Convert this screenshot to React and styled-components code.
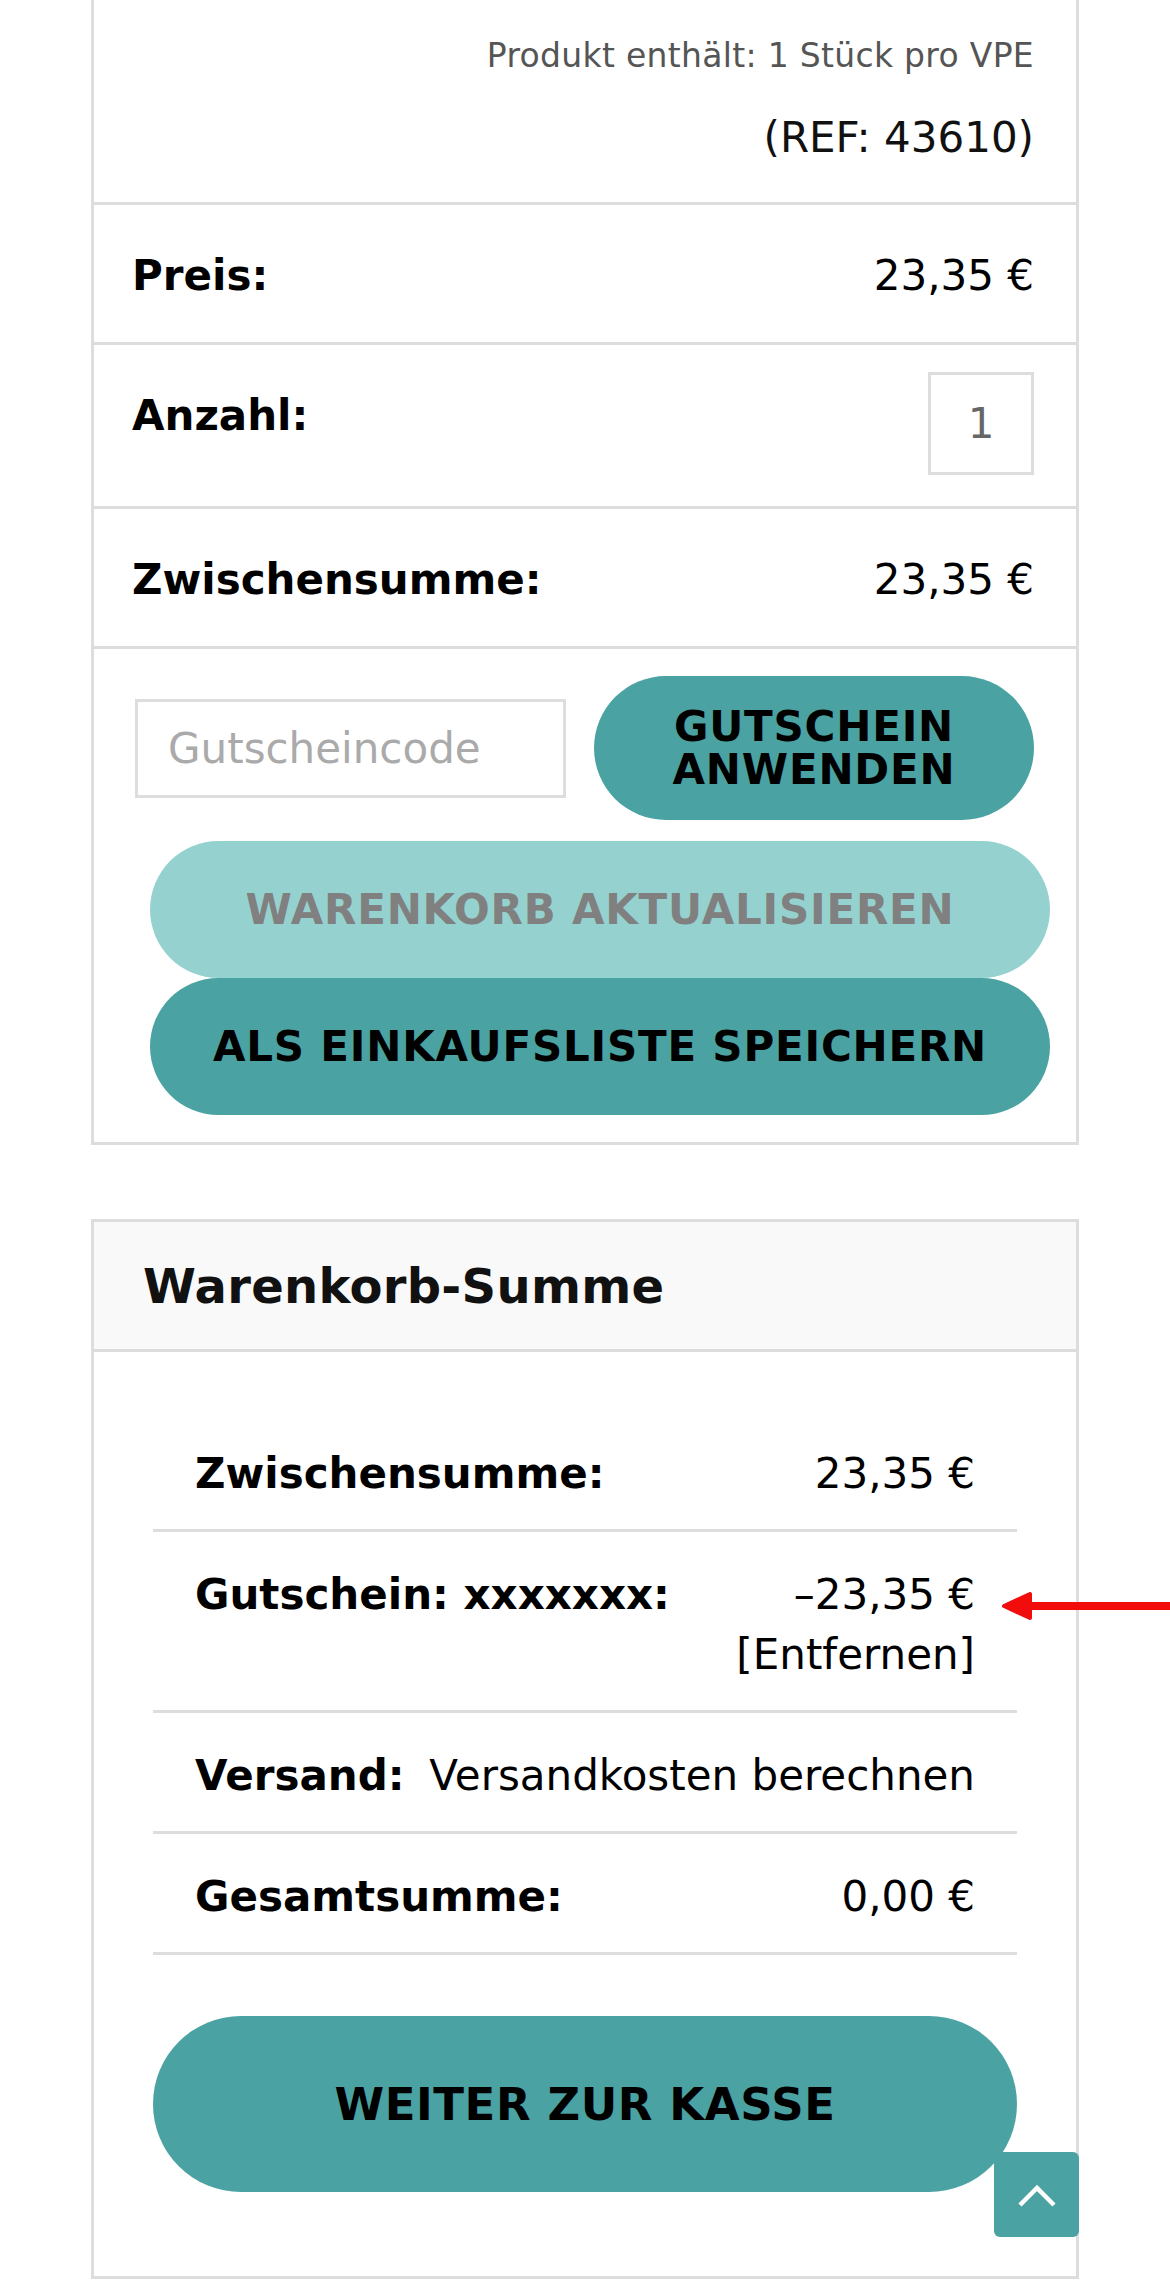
import React from 'react';
import styled, { createGlobalStyle } from 'styled-components';

const teal = '#4aa3a2';
const lightTeal = '#95d2cf';
const line = '#dddddd';

const GlobalStyle = createGlobalStyle`
  * { box-sizing: border-box; }
  body {
    margin: 0;
    background: #fff;
    color: #000;
    font-family: "DejaVu Sans", Verdana, sans-serif;
  }
`;

const Page = styled.div`
  padding: 0 91px 4px;
`;

const CartCard = styled.div`
  border: 3px solid ${line};
  border-top: none;
`;

const InfoCell = styled.div`
  padding: 31px 42px 33px;
  text-align: right;
`;

const PackInfo = styled.div`
  font-size: 33px;
  line-height: 49px;
  letter-spacing: 0.3px;
  color: #555;
`;

const RefInfo = styled.div`
  margin-top: 26px;
  font-size: 42px;
  line-height: 63px;
  color: #111;
`;

const Row = styled.div`
  display: flex;
  justify-content: space-between;
  align-items: flex-start;
  border-top: 3px solid ${line};
  padding: 0 42px 0 38px;
  font-size: 42px;
  line-height: 63px;
`;

const Label = styled.span`
  font-weight: bold;
  padding: 39px 0 35px;
`;

const Value = styled.span`
  padding: 39px 0 35px;
`;

const QtyCell = styled.div`
  padding: 27px 0 31px;
`;

const QtyInput = styled.input`
  display: block;
  width: 106px;
  height: 103px;
  border: 3px solid ${line};
  border-radius: 0;
  text-align: center;
  font: 42px "DejaVu Sans", Verdana, sans-serif;
  color: #666;
  padding: 0;
`;

const CouponSection = styled.div`
  border-top: 3px solid ${line};
  padding: 27px 42px 27px 41px;
`;

const CouponRow = styled.div`
  display: flex;
  align-items: center;
  gap: 28px;
`;

const CouponInput = styled.input`
  width: 431px;
  height: 99px;
  border: 3px solid ${line};
  border-radius: 0;
  padding: 0 30px;
  font: 42px "DejaVu Sans", Verdana, sans-serif;
  color: #333;
  &::placeholder { color: #aaa; }
`;

const PillButton = styled.button`
  display: flex;
  align-items: center;
  justify-content: center;
  border: none;
  border-radius: 999px;
  background: ${({ $light }) => ($light ? lightTeal : teal)};
  color: ${({ $light }) => ($light ? '#808080' : '#000')};
  font-family: "DejaVu Sans", Verdana, sans-serif;
  font-weight: bold;
  font-size: ${({ $size }) => $size || 42}px;
  line-height: 43px;
  letter-spacing: 0.8px;
  text-transform: uppercase;
  text-align: center;
  padding: 0;
`;

const ApplyButton = styled(PillButton)`
  width: 442px;
  height: 144px;
`;

const WideButton = styled(PillButton)`
  width: 900px;
  height: 137px;
  margin-left: 15px;
  margin-top: ${({ $gap }) => $gap || 0}px;
`;

const TotalsCard = styled.div`
  margin-top: 74px;
  border: 3px solid ${line};
`;

const TotalsHeader = styled.div`
  display: flex;
  align-items: center;
  height: 130px;
  padding: 0 49px;
  background: #f9f9f9;
  border-bottom: 3px solid ${line};
`;

const Heading = styled.h2`
  margin: 0;
  font-size: 48px;
  font-weight: bold;
  letter-spacing: 0.3px;
  color: #111;
`;

const TotalsBody = styled.div`
  padding: 59px 59px 84px;
`;

const TotalsRow = styled.div`
  display: flex;
  justify-content: space-between;
  align-items: flex-start;
  gap: 12px;
  padding: 33px 42px 25px;
  border-bottom: 3px solid ${line};
  font-size: 42px;
  line-height: 60px;
`;

const TotalsLabel = styled.span`
  font-weight: bold;
  white-space: nowrap;
`;

const TotalsValue = styled.span`
  position: relative;
  text-align: right;
  white-space: nowrap;
`;

const RemoveLink = styled.span`
  display: block;
`;

const Arrow = styled.svg`
  position: absolute;
  left: calc(100% + 27px);
  top: 24px;
  width: 200px;
  height: 34px;
  overflow: visible;
`;

const CheckoutButton = styled(PillButton)`
  width: 100%;
  height: 176px;
  margin-top: 61px;
  letter-spacing: 0.6px;
`;

const ToTop = styled.button`
  position: fixed;
  right: 91px;
  bottom: 45px;
  width: 85px;
  height: 85px;
  border: none;
  border-radius: 6px;
  background: ${teal};
  display: flex;
  align-items: center;
  justify-content: center;
  padding: 0;
`;

const App = () => (
  <>
    <GlobalStyle />
    <Page>
      <CartCard>
        <InfoCell>
          <PackInfo>Produkt enthält: 1 Stück pro VPE</PackInfo>
          <RefInfo>(REF: 43610)</RefInfo>
        </InfoCell>
        <Row>
          <Label>Preis:</Label>
          <Value>23,35 €</Value>
        </Row>
        <Row>
          <Label>Anzahl:</Label>
          <QtyCell>
            <QtyInput type="text" defaultValue="1" />
          </QtyCell>
        </Row>
        <Row>
          <Label>Zwischensumme:</Label>
          <Value>23,35 €</Value>
        </Row>
        <CouponSection>
          <CouponRow>
            <CouponInput type="text" placeholder="Gutscheincode" />
            <ApplyButton>Gutschein<br />anwenden</ApplyButton>
          </CouponRow>
          <WideButton $light $gap={21}>Warenkorb aktualisieren</WideButton>
          <WideButton>Als Einkaufsliste speichern</WideButton>
        </CouponSection>
      </CartCard>

      <TotalsCard>
        <TotalsHeader>
          <Heading>Warenkorb-Summe</Heading>
        </TotalsHeader>
        <TotalsBody>
          <TotalsRow>
            <TotalsLabel>Zwischensumme:</TotalsLabel>
            <TotalsValue>23,35 €</TotalsValue>
          </TotalsRow>
          <TotalsRow>
            <TotalsLabel>Gutschein: xxxxxxx:</TotalsLabel>
            <TotalsValue>
              –23,35 €
              <RemoveLink>[Entfernen]</RemoveLink>
              <Arrow viewBox="0 0 200 34">
                <path d="M30 17 H200" stroke="#f20d0d" strokeWidth="8" />
                <path d="M2 17 L28 5 L28 29 Z" fill="#f20d0d" stroke="#f20d0d" strokeWidth="4" strokeLinejoin="round" />
              </Arrow>
            </TotalsValue>
          </TotalsRow>
          <TotalsRow>
            <TotalsLabel>Versand:</TotalsLabel>
            <TotalsValue>Versandkosten berechnen</TotalsValue>
          </TotalsRow>
          <TotalsRow>
            <TotalsLabel>Gesamtsumme:</TotalsLabel>
            <TotalsValue>0,00 €</TotalsValue>
          </TotalsRow>
          <CheckoutButton $size={45}>Weiter zur Kasse</CheckoutButton>
        </TotalsBody>
      </TotalsCard>
    </Page>
    <ToTop aria-label="Nach oben">
      <svg width="40" height="26" viewBox="0 0 40 26">
        <path d="M3 23 L20 6 L37 23" fill="none" stroke="#fff" strokeWidth="4.5" />
      </svg>
    </ToTop>
  </>
);

export default App;
